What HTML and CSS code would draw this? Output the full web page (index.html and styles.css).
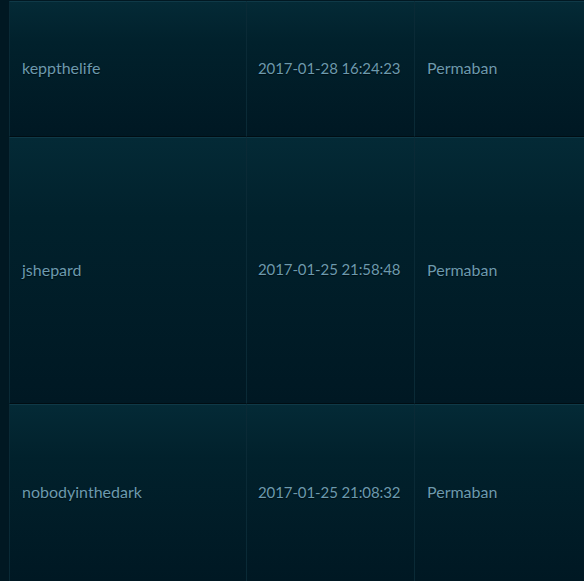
FILE: index.html
```html
<!DOCTYPE html>
<html>
<head>
<meta charset="utf-8">
<link rel="stylesheet" href="styles.css">
</head>
<body>
<div class="wrap">
<table class="bans">
<tbody>
<tr class="r1"><td class="c-user">keppthelife</td><td class="c-date">2017-01-28 16:24:23</td><td class="c-type">Permaban</td></tr>
<tr class="r2"><td class="c-user">jshepard</td><td class="c-date">2017-01-25 21:58:48</td><td class="c-type">Permaban</td></tr>
<tr class="r3"><td class="c-user">nobodyinthedark</td><td class="c-date">2017-01-25 21:08:32</td><td class="c-type">Permaban</td></tr>
</tbody>
</table>
</div>
</body>
</html>
```
FILE: styles.css
```css
html, body {
  margin: 0;
  padding: 0;
  background: #011822;
  overflow: hidden;
}
.wrap {
  padding: 1px 0 0 9px;
}
.bans {
  border-collapse: separate;
  border-spacing: 0;
  width: 575px;
  table-layout: fixed;
  font-family: "Lato", "Open Sans", sans-serif;
  font-size: 16px;
  color: #6c9aae;
}
.bans td {
  background: linear-gradient(to bottom, #042a36 0%, #01212c 30%, #001823 100%);
  border-left: 1px solid #0a2a36;
  border-top: 1px solid #0f3947;
  border-bottom: 1px solid #000d13;
  vertical-align: middle;
  padding: 0 0 3px 12px;
  text-shadow: 0 1px 1px rgba(0,0,0,0.6);
  white-space: nowrap;
}
.bans td.c-user { width: 224px; }
.bans td.c-date { width: 156px; padding-left: 11px; font-size: 15px; letter-spacing: -0.1px; }
.bans td.c-type { padding-left: 12px; }
.r1 td { height: 131px; }
.r2 td { height: 262px; }
.r3 td { height: 173px; }
```
